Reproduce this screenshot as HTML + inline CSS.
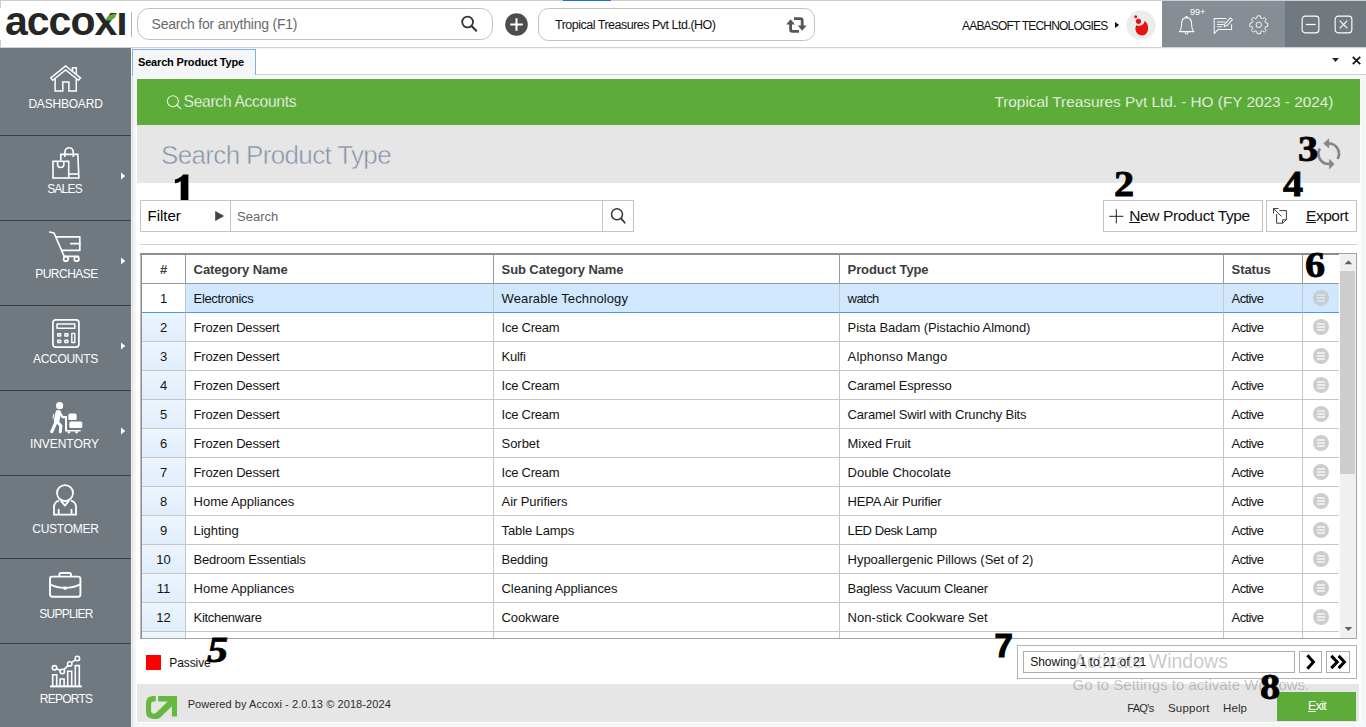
<!DOCTYPE html>
<html lang="en"><head><meta charset="utf-8"><title>Accoxi - Search Product Type</title>
<style>
*{box-sizing:border-box;margin:0;padding:0}
html,body{width:1366px;height:727px;overflow:hidden}
body{position:relative;background:#f5f6f8;font-family:"Liberation Sans",sans-serif;color:#111;font-size:13px}
.abs{position:absolute}
.t{position:absolute;white-space:pre;line-height:1}
svg{position:absolute;overflow:visible}
/* top bar */
#topbar{position:absolute;left:0;top:0;width:1366px;height:48px;background:#fff;border-top:1px solid #cfcfcf;border-bottom:1px solid #d2d2d2}
#logo{left:5px;top:1px;font-weight:700;font-size:41px;letter-spacing:-1.0px;color:#262626}
.pill{position:absolute;top:8px;height:32px;border:1px solid #c2c2c2;border-radius:16px;background:#fff}
/* sidebar */
#side{position:absolute;left:0;top:48px;width:131px;height:679px;background:#707880}
.sep{position:absolute;left:0;width:131px;height:1px;background:#3d3e40}
.sl{position:absolute;left:0;width:131px;text-align:center;color:#fff;font-size:12px;line-height:1;white-space:pre}
.arr{position:absolute;left:121px;width:0;height:0;border-left:4px solid #fff;border-top:3.5px solid transparent;border-bottom:3.5px solid transparent}
/* main */
#panel{position:absolute;left:136px;top:78px;width:1225px;height:645px;background:#fff}
#green{position:absolute;left:137px;top:79px;width:1223px;height:46px;background:#5dac39}
#band{position:absolute;left:137px;top:125px;width:1223px;height:58px;background:#e6e6e6}
.num{position:absolute;font-family:"Liberation Serif",serif;font-weight:700;font-size:35px;line-height:1;color:#000;transform:scaleX(1.15);transform-origin:0 0;-webkit-text-stroke:0.8px #000}
.box{position:absolute;border:1px solid #c4c4c4;background:#fff}
/* table */
#tbl{position:absolute;left:140px;top:253px;width:1217px;height:386px;border-right:1px solid #a6a6a6;border-left:2px solid #8e8e8e;border-top:2px solid #8e8e8e;border-bottom:1px solid #a6a6a6;background:#fff}
.hd{position:absolute;top:255px;height:29px;border-bottom:1px solid #9a9a9a;border-right:1px solid #9a9a9a;font-weight:700;font-size:13px;letter-spacing:-0.1px;color:#3c3c3c;line-height:29.4px;padding-left:7.6px;white-space:pre;background:#fff}
.row{position:absolute;left:142px;width:1197px;height:29px;overflow:hidden}
.c{position:absolute;top:0;height:29px;border-bottom:1px solid #c6c6c6;border-right:1px solid #c6c6c6;line-height:30px;padding-left:7.6px;white-space:pre;font-size:13px;color:#141414;background:#fff}
.c0{left:0;width:44px;padding-left:0;text-align:center;background:linear-gradient(180deg,#edf5fd,#e0edfb)}
.c1{left:44px;width:308px}
.c2{left:352px;width:346px}
.c3{left:698px;width:384px}
.c4{left:1082px;width:79px;letter-spacing:-0.62px;padding-left:7.6px}
.c5{left:1161px;width:36px;border-right:none}
.sel .c{background:#d0e7fd;border-bottom:1px solid #4f97e3}
.sel .c0{background:#fff}
.mn{position:absolute;left:10px;top:6px;width:16px;height:16px;border-radius:8px;background:#cdcdcd}
.mn:before{content:"";position:absolute;left:4px;top:4px;width:8px;height:2px;background:#ececec;box-shadow:0 3px 0 #ececec,0 6px 0 #ececec}
.sel .mn{background:#c9cdd2}
.sel .mn:before{background:#d3e3f4;box-shadow:0 3px 0 #d3e3f4,0 6px 0 #d3e3f4}
/* footer */
#fband{position:absolute;left:137px;top:684px;width:1222px;height:38px;background:#e6e6e6}

</style></head>
<body>
<div id="topbar"></div>
<div class="abs" style="left:563px;top:0;width:48px;height:1px;background:#1b6fd8"></div>
<div class="abs" style="left:0;top:0;width:1px;height:8px;background:#cfcfcf"></div>
<div class="abs" style="left:0;top:40px;width:1px;height:8px;background:#cfcfcf"></div>
<div id="logo" class="t">accox<span style="letter-spacing:0">&#305;</span></div>
<svg style="left:105px;top:12.6px" width="12" height="8" viewBox="0 0 14 9"><path d="M0.3 8.4 C2.5 3 7.5 0.4 13.7 0.3 C12.4 6.4 7 9.6 0.3 8.4Z" fill="#5dac39"/></svg>
<div class="abs" style="left:131px;top:12px;width:1px;height:25px;background:#b4b4b4"></div>
<div class="pill" style="left:137px;width:356px;border-radius:12px"></div>
<div class="t" style="left:151.6px;top:16.9px;font-size:14px;letter-spacing:-0.22px;color:#6a6a6a">Search for anything (F1)</div>
<svg style="left:458px;top:13px" width="22" height="22" viewBox="0 0 22 22"><circle cx="9.6" cy="9" r="5.4" fill="none" stroke="#333" stroke-width="1.8"/><path d="M13.6 13 L18.2 17.8" stroke="#333" stroke-width="2" stroke-linecap="round"/></svg>
<svg style="left:505px;top:13px" width="23" height="23" viewBox="0 0 23 23"><circle cx="11.5" cy="11.5" r="11.3" fill="#4d4d4d"/><path d="M11.5 5.2V17.8M5.2 11.5H17.8" stroke="#fff" stroke-width="2"/></svg>
<div class="pill" style="left:538px;width:277px;height:33px;border-radius:10.5px"></div>
<div class="t" style="left:555px;top:18.6px;font-size:12.5px;letter-spacing:-0.5px;color:#111">Tropical Treasures Pvt Ltd.(HO)</div>
<svg style="left:786px;top:16px" width="21" height="18" viewBox="0 0 21 18"><g fill="none" stroke="#555" stroke-width="2.8" stroke-linejoin="round"><path d="M4.6 8V13.6Q4.6 15.4 6.4 15.4H13"/><path d="M16.2 10V4.4Q16.2 2.6 14.4 2.6H8"/></g><path d="M0.2 8.6L4.6 3.2L9 8.6Z" fill="#555"/><path d="M11.8 9.4L16.2 14.8L20.6 9.4Z" fill="#555"/></svg>
<div class="t" style="left:962px;top:20px;font-size:12px;letter-spacing:-0.8px;color:#111">AABASOFT TECHNOLOGIES</div>
<svg style="left:1115px;top:21px" width="5" height="8" viewBox="0 0 5 8"><path d="M0 0.9L4.2 4L0 7.1Z" fill="#111"/></svg>
<svg style="left:1126px;top:10px" width="30" height="31" viewBox="0 0 30 31"><circle cx="15" cy="15.2" r="14.6" fill="#ececec"/><path d="M18.7 10.8C23 14.2 23.4 21.6 19.4 24.4C15.6 27 10.4 24.6 9.6 20C9.2 18 9.6 16.4 10.4 15.2C13.6 17.2 18.4 15 18.7 10.8Z" fill="#e81212"/><circle cx="12.5" cy="11.3" r="2.6" fill="#e81212"/><circle cx="9.7" cy="6.7" r="1.5" fill="#e81212"/></svg>
<div class="abs" style="left:1162px;top:1px;width:123px;height:46px;background:#868d94"></div>
<div class="abs" style="left:1285px;top:1px;width:81px;height:46px;background:#707880"></div>
<!-- bell -->
<svg style="left:1178px;top:14.5px" width="18" height="21" viewBox="0 0 18 21"><g fill="none" stroke="#fff" stroke-opacity="0.93" stroke-width="1.05" stroke-linejoin="round" stroke-linecap="round"><path d="M1.3 16.6 C3.6 14.6 3.4 11.6 3.6 8.6 C3.8 4.8 6 2.6 8.6 2.6 C11.2 2.6 13.4 4.8 13.6 8.6 C13.8 11.6 13.6 14.6 15.9 16.6 Z"/><path d="M7.6 2.6 C7.6 1 9.6 1 9.6 2.6"/><path d="M7.2 17.2 C7.2 19.6 10 19.6 10 17.2"/></g></svg>
<div class="t" style="left:1190px;top:7.6px;font-size:9.2px;color:#fff;letter-spacing:-0.1px">99+</div>
<!-- chat -->
<svg style="left:1213px;top:16px" width="21" height="19" viewBox="0 0 21 19"><g fill="none" stroke="#fff" stroke-opacity="0.93" stroke-width="1.05" stroke-linejoin="round" stroke-linecap="round"><path d="M13 2.4H1.2V17.6L5.2 13.4H18.6V8.4"/><path d="M4.4 6H12M4.4 8.4H10.4M4.4 10.8H8.6"/><path d="M11.2 10.4L12 7.8L17.4 1.8L19.4 3.6L14 9.6Z"/></g></svg>
<!-- gear -->
<svg style="left:1248.7px;top:14.6px" width="19.6" height="19.6" viewBox="-10.5 -10.5 21 21"><g fill="none" stroke="#fff" stroke-opacity="0.93" stroke-width="1.05" stroke-linejoin="round"><circle r="2.9"/><path d="M-1.7 -9.6 H1.7 L2.2 -7.2 L3.9 -6.5 L5.9 -7.9 L7.9 -5.9 L6.5 -3.9 L7.2 -2.2 L9.6 -1.7 V1.7 L7.2 2.2 L6.5 3.9 L7.9 5.9 L5.9 7.9 L3.9 6.5 L2.2 7.2 L1.7 9.6 H-1.7 L-2.2 7.2 L-3.9 6.5 L-5.9 7.9 L-7.9 5.9 L-6.5 3.9 L-7.2 2.2 L-9.6 1.7 V-1.7 L-7.2 -2.2 L-6.5 -3.9 L-7.9 -5.9 L-5.9 -7.9 L-3.9 -6.5 L-2.2 -7.2 Z"/></g></svg>
<!-- min / close -->
<svg style="left:1301.4px;top:15.4px" width="19" height="19" viewBox="0 0 20 20"><rect x="1.2" y="1.2" width="17.6" height="17.6" rx="3.2" fill="none" stroke="#fff" stroke-width="1.2"/><path d="M5 10H15.4" stroke="#fff" stroke-width="1.3"/></svg>
<svg style="left:1333.5px;top:15.4px" width="19" height="19" viewBox="0 0 20 20"><rect x="1.2" y="1.2" width="17.6" height="17.6" rx="3.2" fill="none" stroke="#fff" stroke-width="1.2"/><path d="M6 6L14 14M14 6L6 14" stroke="#fff" stroke-width="1.2"/></svg>

<div id="side"></div>
<div class="sep" style="top:135px"></div><div class="sep" style="top:220px"></div><div class="sep" style="top:305px"></div><div class="sep" style="top:390px"></div><div class="sep" style="top:475px"></div><div class="sep" style="top:558px"></div><div class="sep" style="top:643px"></div>
<div class="sl" style="top:98.2px;letter-spacing:-0.2px">DASHBOARD</div>
<div class="sl" style="top:183.2px;letter-spacing:-0.8px;left:-1px">SALES</div>
<div class="sl" style="top:268.2px;letter-spacing:-0.5px;left:1px">PURCHASE</div>
<div class="sl" style="top:353.2px;letter-spacing:-0.3px">ACCOUNTS</div>
<div class="sl" style="top:438.2px;letter-spacing:-0.05px;left:-1px">INVENTORY</div>
<div class="sl" style="top:523.2px;letter-spacing:-0.25px;left:0px">CUSTOMER</div>
<div class="sl" style="top:608.2px;letter-spacing:-0.75px;left:0.5px">SUPPLIER</div>
<div class="sl" style="top:693.2px;letter-spacing:-0.75px;left:0.5px">REPORTS</div>
<svg style="left:121px;top:172px" width="5" height="8" viewBox="0 0 5 8"><path d="M0 0.4L4.3 4L0 7.6Z" fill="#fff"/></svg><svg style="left:121px;top:257px" width="5" height="8" viewBox="0 0 5 8"><path d="M0 0.4L4.3 4L0 7.6Z" fill="#fff"/></svg><svg style="left:121px;top:342px" width="5" height="8" viewBox="0 0 5 8"><path d="M0 0.4L4.3 4L0 7.6Z" fill="#fff"/></svg><svg style="left:121px;top:427px" width="5" height="8" viewBox="0 0 5 8"><path d="M0 0.4L4.3 4L0 7.6Z" fill="#fff"/></svg>
<!-- house -->
<svg style="left:50.3px;top:64.8px" width="32" height="27" viewBox="0 0 32 27"><g fill="none" stroke="#fff" stroke-width="1.5" stroke-linejoin="miter"><path d="M15.6 0.9L30.5 12.9L28.5 15.3L15.6 5L2.7 15.3L0.8 12.9Z"/><path d="M22.5 6V2.7H26.3V9.4"/><path d="M5.1 13.8V25.9H12.8V17H18.9V25.9H26.3V13.8"/></g></svg>
<!-- sales -->
<svg style="left:52.2px;top:147px" width="28" height="32" viewBox="0 0 28 32"><g fill="none" stroke="#fff" stroke-width="1.6" stroke-linejoin="miter"><path d="M8.8 13.4V7.4H25.8L26.9 31H16.7"/><path d="M12.9 10V5.4C12.9 -0.8 21.3 -0.8 21.3 5.4V10"/><path d="M16.7 27H26.7"/><rect x="1" y="14.3" width="15.7" height="16.7"/><path d="M5.5 14.6V16.4C5.5 21.8 11.9 21.8 11.9 16.4V14.6"/></g></svg>
<!-- purchase -->
<svg style="left:49.3px;top:231.2px" width="33" height="31" viewBox="0 0 33 31"><g fill="none" stroke="#fff" stroke-width="1.7" stroke-linejoin="round" stroke-linecap="round"><path d="M0.8 1L5 2L15.2 25.4H29.4"/><path d="M7.4 5.8H30.8V19.4H12.8"/><path d="M21.8 12.7H30.8"/><circle cx="16.9" cy="27.9" r="2.3"/><circle cx="27.6" cy="27.9" r="2.3"/></g></svg>
<!-- accounts -->
<svg style="left:52.2px;top:318.7px" width="28" height="29" viewBox="0 0 28 29"><g fill="none" stroke="#fff" stroke-linejoin="round"><rect x="0.9" y="0.9" width="26" height="27.2" rx="2.8" stroke-width="1.7"/><rect x="5" y="4.9" width="17.8" height="4.4" stroke-width="1.5"/><rect x="5.7" y="14.7" width="3" height="2.3" stroke-width="1.4"/><rect x="12.9" y="14.7" width="3" height="2.3" stroke-width="1.4"/><rect x="5.7" y="21.2" width="3" height="2.3" stroke-width="1.4"/><rect x="12.9" y="21.2" width="3" height="2.3" stroke-width="1.4"/><rect x="19.8" y="14.4" width="3" height="9.1" stroke-width="1.4"/></g></svg>
<!-- inventory -->
<svg style="left:49.8px;top:402px" width="33" height="32" viewBox="0 0 33 32"><g fill="#fff"><circle cx="9.6" cy="3.7" r="3.6"/><rect x="18.3" y="11.6" width="8.3" height="6.3" rx="1.5"/><rect x="19.3" y="19.4" width="13" height="6.6" rx="1.6"/><path d="M15 14H17V28H30.6V29.6H15Z"/><circle cx="18.9" cy="30.3" r="1.2"/><circle cx="26.6" cy="30.3" r="1.2"/></g><g fill="none" stroke="#fff" stroke-linecap="round" stroke-linejoin="round"><path d="M8.2 10.8L6.6 18.6" stroke-width="5.6"/><path d="M9.8 10.6L12.6 15.2L15.8 15.2" stroke-width="2.3"/><path d="M5.8 20.6L1.8 29.6" stroke-width="3.2"/><path d="M8.2 20.8L10.9 24L10.3 29.8" stroke-width="3"/><path d="M3.6 12.4L3 16.4" stroke-width="1"/></g></svg>
<!-- customer -->
<svg style="left:53px;top:484px" width="25" height="32" viewBox="0 0 25 32"><g fill="none" stroke="#fff" stroke-width="1.8" stroke-linejoin="round"><circle cx="12" cy="9.1" r="8"/><path d="M6 16.6C2.2 17.6 1 20.2 1 23.4V30.7H23V23.4C23 20.2 21.8 17.6 18 16.6"/><path d="M7.8 16.6L11.9 21.6L16 16.6"/><path d="M5.7 25V30.7M18.5 25V30.7"/></g></svg>
<!-- supplier -->
<svg style="left:48.8px;top:572px" width="33" height="26" viewBox="0 0 33 26"><g fill="none" stroke="#fff" stroke-width="1.9" stroke-linejoin="round"><rect x="1" y="4.6" width="30.4" height="20.2" rx="2.2"/><path d="M10.4 4.6V2.6Q10.4 1 12 1H20.4Q22 1 22 2.6V4.6"/><path d="M1 12.4C10 17 22 17 31.4 12.4"/></g><rect x="14.3" y="14.6" width="3.6" height="3.2" rx="1.2" fill="#fff"/></svg>
<!-- reports -->
<svg style="left:50px;top:655.7px" width="32" height="32" viewBox="0 0 32 32"><g fill="none" stroke="#fff" stroke-width="1.6"><path d="M0 30.4H31.8" stroke-width="2"/><path d="M2.7 30V18.8H6.7V30M10.1 30V23H14.1V30M17.7 30V15.2H21.7V30M25.3 30V9.6H29.3V30"/><path d="M6.5 12.8L10.4 14.6M14 13.6L18 9.6M21.4 6.6L25.6 3.6"/><circle cx="4.5" cy="11.8" r="2.2"/><circle cx="12.3" cy="15.5" r="2.2"/><circle cx="19.7" cy="7.9" r="2.2"/><circle cx="27.4" cy="2.5" r="2.2"/></g></svg>

<!-- tab strip -->
<div class="abs" style="left:131px;top:48px;width:1235px;height:27px;background:#fff;border-bottom:1px solid #cfcfcf;border-top:1px solid #f3f4f5"></div>
<div class="abs" style="left:132px;top:75px;width:1px;height:652px;background:#dcdcdc"></div>
<div class="abs" style="left:132px;top:49px;width:124px;height:26px;background:#f5f6f8;border:1px solid #7fb0ea;border-bottom:none"></div>
<div class="t" style="left:138px;top:56.9px;font-weight:700;font-size:11px;letter-spacing:-0.17px;color:#000">Search Product Type</div>
<svg style="left:1332px;top:57px" width="8" height="6" viewBox="0 0 8 6"><path d="M0.1 0.9H6.9L3.5 5Z" fill="#222"/></svg>
<svg style="left:1352px;top:56px" width="9" height="9" viewBox="0 0 9 9"><path d="M0.8 0.8L8.2 8.2M8.2 0.8L0.8 8.2" stroke="#111" stroke-width="1.7"/></svg>
<!-- panel -->
<div id="panel"></div>
<div id="green"></div>
<svg style="left:165px;top:93px" width="18" height="18" viewBox="0 0 18 18"><circle cx="7.9" cy="8.2" r="5.5" fill="none" stroke="#fff" stroke-opacity="0.88" stroke-width="1.05"/><path d="M11.9 12.2L15.8 15.6" stroke="#fff" stroke-opacity="0.88" stroke-width="1.15" stroke-linecap="round"/></svg>
<div class="t" style="left:183.6px;top:94.4px;font-size:15.6px;letter-spacing:-0.29px;color:#fff;-webkit-text-stroke:0.3px #5dac39">Search Accounts</div>
<div class="t" style="right:32.6px;top:93.8px;font-size:15.4px;letter-spacing:-0.03px;color:#fff;-webkit-text-stroke:0.25px #5dac39">Tropical Treasures Pvt Ltd. - HO (FY 2023 - 2024)</div>
<div id="band"></div>
<div class="t" style="left:161px;top:142.2px;font-size:26px;letter-spacing:-0.65px;color:#8391a6;-webkit-text-stroke:0.55px #e6e6e6">Search Product Type</div>
<svg style="left:1317px;top:138px" width="24" height="32" viewBox="0 0 24 32"><g fill="none" stroke="#868686" stroke-width="2.7"><path d="M11.6 5.5A10.2 10.2 0 0 1 20.5 20.9"/><path d="M12.6 25.9A10.2 10.2 0 0 1 2.9 10.5"/></g><path d="M6.3 5.4L12.2 0.3V10.6Z" fill="#868686"/><path d="M17.5 26L12.2 20.8V31.4Z" fill="#868686"/></svg>
<div class="num" style="left:1298px;top:132.2px">3</div>
<!-- filter -->
<div class="box" style="left:140px;top:200px;width:494px;height:32px"></div>
<div class="abs" style="left:230px;top:201px;width:1px;height:30px;background:#c4c4c4"></div>
<div class="abs" style="left:602px;top:201px;width:1px;height:30px;background:#c4c4c4"></div>
<div class="t" style="left:147.5px;top:207.6px;font-size:15px;color:#000">Filter</div>
<svg style="left:215px;top:211px" width="10" height="10" viewBox="0 0 10 10"><path d="M0.2 0.1L9.2 5L0.2 9.9Z" fill="#444"/></svg>
<div class="t" style="left:237px;top:209.7px;font-size:13px;color:#666">Search</div>
<svg style="left:607px;top:205px" width="22" height="22" viewBox="0 0 22 22"><circle cx="10" cy="9.3" r="5.5" fill="none" stroke="#333" stroke-width="1.5"/><path d="M14 13.4L17.8 17.8" stroke="#333" stroke-width="1.7" stroke-linecap="round"/></svg>
<svg style="left:170px;top:170px" width="20" height="31" viewBox="0 0 20 31"><path d="M13.1 4.6H18.4V30H10.7V10.9C9.3 12 7.3 12.9 4.9 13.3V9.4C8.5 8.8 11.5 7 13.1 4.6Z" fill="#000"/></svg>
<!-- buttons -->
<div class="box" style="left:1103px;top:200px;width:160px;height:32px"></div>
<svg style="left:1109px;top:209px" width="15" height="15" viewBox="0 0 15 15"><path d="M7.3 0.2V14.4M0.2 7.3H14.4" stroke="#222" stroke-width="1"/></svg>
<div class="t" style="left:1129.2px;top:207.6px;font-size:15.5px;letter-spacing:-0.36px;color:#111"><span style="text-decoration:underline">N</span>ew Product Type</div>
<div class="box" style="left:1266px;top:200px;width:91px;height:32px"></div>
<svg style="left:1272px;top:207px" width="16" height="17" viewBox="0 0 16 17"><g fill="none" stroke="#3a3a3a" stroke-width="1"><path d="M7.4 3.6H14.4V12.6L10.6 16.2H4.6V7"/><path d="M10.6 16.2V12.8H14.2"/><path d="M1.5 1.6L9.4 9.4M1.5 6.4V1.6H6.6"/></g></svg>
<div class="t" style="left:1306px;top:207.6px;font-size:15.5px;letter-spacing:-0.45px;color:#111"><span style="text-decoration:underline">E</span>xport</div>
<div class="num" style="left:1113.5px;top:166.7px">2</div>
<div class="num" style="left:1282.5px;top:166.7px">4</div>
<div class="abs" style="left:140px;top:244px;width:1217px;height:1px;background:#d2d2d2"></div>
<!-- table -->
<div id="tbl"></div>
<div class="abs" style="left:140px;top:255px;width:1px;height:383px;background:#bdbdbd"></div>
<div class="hd" style="left:142px;width:44px;padding-left:0;text-align:center">#</div>
<div class="hd" style="left:186px;width:308px">Category Name</div>
<div class="hd" style="left:494px;width:346px">Sub Category Name</div>
<div class="hd" style="left:840px;width:384px">Product Type</div>
<div class="hd" style="left:1224px;width:79px">Status</div>
<div class="hd" style="left:1303px;width:36px;border-right:none"></div>
<div class="row sel" style="top:284px"><div class="c c0">1</div><div class="c c1" style="letter-spacing:-0.35px">Electronics</div><div class="c c2" style="letter-spacing:0.1px">Wearable Technology</div><div class="c c3" style="letter-spacing:-0.55px">watch</div><div class="c c4">Active</div><div class="c c5"><i class="mn"></i></div></div>
<div class="row" style="top:313px"><div class="c c0">2</div><div class="c c1" style="letter-spacing:-0.21px">Frozen Dessert</div><div class="c c2" style="letter-spacing:-0.26px">Ice Cream</div><div class="c c3" style="letter-spacing:-0.1px">Pista Badam (Pistachio Almond)</div><div class="c c4">Active</div><div class="c c5"><i class="mn"></i></div></div>
<div class="row" style="top:342px"><div class="c c0">3</div><div class="c c1" style="letter-spacing:-0.21px">Frozen Dessert</div><div class="c c2" style="letter-spacing:-0.27px">Kulfi</div><div class="c c3" style="letter-spacing:0.16px">Alphonso Mango</div><div class="c c4">Active</div><div class="c c5"><i class="mn"></i></div></div>
<div class="row" style="top:371px"><div class="c c0">4</div><div class="c c1" style="letter-spacing:-0.21px">Frozen Dessert</div><div class="c c2" style="letter-spacing:-0.26px">Ice Cream</div><div class="c c3" style="letter-spacing:-0.19px">Caramel Espresso</div><div class="c c4">Active</div><div class="c c5"><i class="mn"></i></div></div>
<div class="row" style="top:400px"><div class="c c0">5</div><div class="c c1" style="letter-spacing:-0.21px">Frozen Dessert</div><div class="c c2" style="letter-spacing:-0.26px">Ice Cream</div><div class="c c3" style="letter-spacing:-0.2px">Caramel Swirl with Crunchy Bits</div><div class="c c4">Active</div><div class="c c5"><i class="mn"></i></div></div>
<div class="row" style="top:429px"><div class="c c0">6</div><div class="c c1" style="letter-spacing:-0.21px">Frozen Dessert</div><div class="c c2" style="letter-spacing:-0.06px">Sorbet</div><div class="c c3" style="letter-spacing:-0.09px">Mixed Fruit</div><div class="c c4">Active</div><div class="c c5"><i class="mn"></i></div></div>
<div class="row" style="top:458px"><div class="c c0">7</div><div class="c c1" style="letter-spacing:-0.21px">Frozen Dessert</div><div class="c c2" style="letter-spacing:-0.26px">Ice Cream</div><div class="c c3">Double Chocolate</div><div class="c c4">Active</div><div class="c c5"><i class="mn"></i></div></div>
<div class="row" style="top:487px"><div class="c c0">8</div><div class="c c1" style="letter-spacing:-0.04px">Home Appliances</div><div class="c c2" style="letter-spacing:-0.1px">Air Purifiers</div><div class="c c3" style="letter-spacing:-0.2px">HEPA Air Purifier</div><div class="c c4">Active</div><div class="c c5"><i class="mn"></i></div></div>
<div class="row" style="top:516px"><div class="c c0">9</div><div class="c c1" style="letter-spacing:-0.07px">Lighting</div><div class="c c2" style="letter-spacing:-0.11px">Table Lamps</div><div class="c c3" style="letter-spacing:-0.44px">LED Desk Lamp</div><div class="c c4">Active</div><div class="c c5"><i class="mn"></i></div></div>
<div class="row" style="top:545px"><div class="c c0">10</div><div class="c c1" style="letter-spacing:-0.21px">Bedroom Essentials</div><div class="c c2" style="letter-spacing:-0.23px">Bedding</div><div class="c c3" style="letter-spacing:-0.04px">Hypoallergenic Pillows (Set of 2)</div><div class="c c4">Active</div><div class="c c5"><i class="mn"></i></div></div>
<div class="row" style="top:574px"><div class="c c0">11</div><div class="c c1" style="letter-spacing:-0.04px">Home Appliances</div><div class="c c2" style="letter-spacing:-0.11px">Cleaning Appliances</div><div class="c c3" style="letter-spacing:-0.25px">Bagless Vacuum Cleaner</div><div class="c c4">Active</div><div class="c c5"><i class="mn"></i></div></div>
<div class="row" style="top:603px"><div class="c c0">12</div><div class="c c1" style="letter-spacing:-0.31px">Kitchenware</div><div class="c c2" style="letter-spacing:-0.13px">Cookware</div><div class="c c3" style="letter-spacing:0.03px">Non-stick Cookware Set</div><div class="c c4">Active</div><div class="c c5"><i class="mn"></i></div></div>
<div class="row" style="top:632px;height:6px"><div class="c c0"></div><div class="c c1"></div><div class="c c2"></div><div class="c c3"></div><div class="c c4"></div><div class="c c5"></div></div>
<!-- scrollbar -->
<div class="abs" style="left:1340px;top:253px;width:17px;height:1px;background:#a2a2a2"></div>
<div class="abs" style="left:1339px;top:254px;width:1px;height:384px;background:#fff"></div>
<div class="abs" style="left:1340px;top:254px;width:16px;height:384px;background:#f0f0f0"></div>
<div class="abs" style="left:1340px;top:271px;width:15px;height:203px;background:#cdcdcd"></div>
<svg style="left:1344px;top:259px" width="9" height="6" viewBox="0 0 9 6"><path d="M0.6 5.2H8.2L4.4 1.2Z" fill="#606060"/></svg>
<svg style="left:1344px;top:626px" width="9" height="6" viewBox="0 0 9 6"><path d="M0.6 1H8.2L4.4 5Z" fill="#606060"/></svg>
<div class="num" style="left:1304.5px;top:248.4px">6</div>

<!-- legend -->
<div class="abs" style="left:146px;top:655px;width:15px;height:15px;background:#ff0000"></div>
<div class="t" style="left:169.3px;top:656.6px;font-size:12px;letter-spacing:-0.1px;color:#111">Passive</div>
<div class="num" style="left:207.2px;top:633.4px;font-style:italic;transform:scaleX(1.2);-webkit-text-stroke:0.8px #000">5</div>
<div class="num" style="left:994.4px;top:629.2px;font-size:33px;font-family:'Liberation Sans',sans-serif;transform:none;-webkit-text-stroke:1.1px #000">7</div>
<!-- pager -->
<div class="box" style="left:1017px;top:645px;width:340px;height:34px;border-color:#b4b4b4"></div>
<div class="box" style="left:1023px;top:651px;width:272px;height:22px;border-color:#adadad"></div>
<div class="t" style="left:1030.2px;top:655.7px;font-size:12px;color:#111">Showing 1 to 21 of 21</div>
<div class="box" style="left:1299px;top:651px;width:23px;height:22px;border-color:#adadad"></div>
<div class="box" style="left:1326px;top:651px;width:24px;height:22px;border-color:#adadad"></div>
<svg style="left:1304px;top:655px" width="14" height="14" viewBox="0 0 14 14"><path d="M3.4 0.3L9.4 7L3.4 13.7" fill="none" stroke="#000" stroke-width="3"/></svg>
<svg style="left:1329px;top:655px" width="18" height="14" viewBox="0 0 18 14"><path d="M2.3 0.9L8.2 7L2.3 13.1M9.6 0.9L15.4 7L9.6 13.1" fill="none" stroke="#000" stroke-width="3"/></svg>
<!-- footer -->
<div id="fband"></div>
<svg style="left:146px;top:695px" width="31" height="24" viewBox="0 0 31 24"><path d="M9.8 0.9H7.4Q0 0.9 0 8.3V16.6Q0 23.9 7.4 23.9H10.6Q12.8 23.9 14.6 22.3L25.9 11.3V21.5H31V0.9H12.1V6.4H21.7L10.4 17.6Q9.6 18.5 8.4 18.5H7.9Q5.1 18.5 5.1 15.7V9.2Q5.1 6.4 7.9 6.4H9.8Z" fill="#66b840"/></svg>
<div class="t" style="left:187.7px;top:698.7px;font-size:11px;letter-spacing:0.08px;color:#2c2c2c">Powered by Accoxi - 2.0.13 © 2018-2024</div>
<div class="t" style="left:1127.2px;top:703.2px;font-size:11px;letter-spacing:-0.65px;color:#2c2c2c">FAQ's</div>
<div class="t" style="left:1168px;top:703px;font-size:11.5px;letter-spacing:0.2px;color:#2c2c2c">Support</div>
<div class="t" style="left:1223px;top:703px;font-size:11.5px;letter-spacing:0.1px;color:#2c2c2c">Help</div>
<div class="abs" style="left:1277.4px;top:691.6px;width:78.6px;height:29.3px;background:#5dac39"></div>
<div class="t" style="left:1308px;top:699.8px;font-size:12.5px;letter-spacing:-0.7px;color:#fff"><span style="text-decoration:underline">E</span>xit</div>
<!-- watermark -->
<div class="t" style="left:1074px;top:651.5px;font-size:19.5px;color:rgba(60,60,60,0.29)">Activate Windows</div>
<div class="t" style="left:1072.5px;top:676.7px;font-size:15px;color:rgba(60,60,60,0.29)">Go to Settings to activate Windows.</div>
<div class="num" style="left:1259.7px;top:670.2px">8</div>

</body></html>
